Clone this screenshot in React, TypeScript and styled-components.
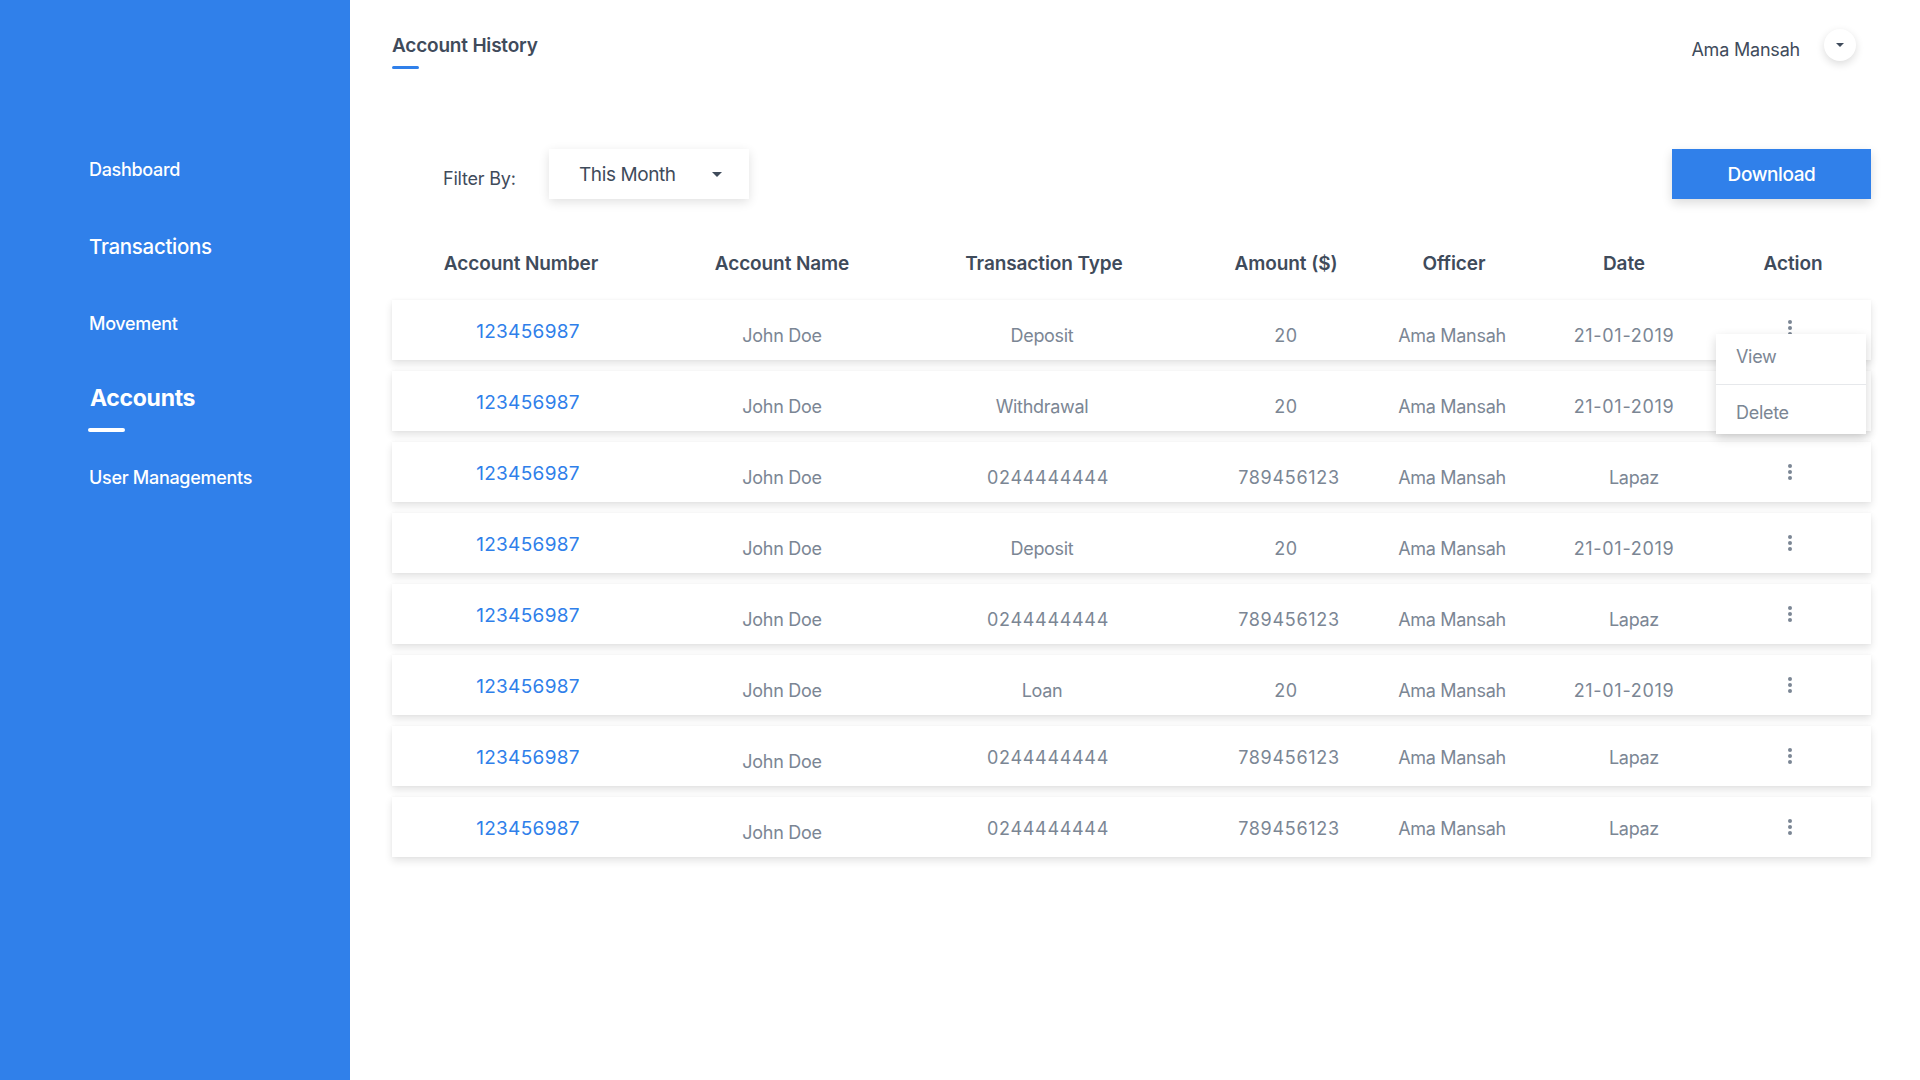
import React from "react";
import styled, { createGlobalStyle } from "styled-components";

const GlobalStyle = createGlobalStyle`
  html, body { margin: 0; padding: 0; background: #ffffff; }
  body { font-family: Inter, "Noto Sans", "Liberation Sans", sans-serif; -webkit-font-smoothing: antialiased; }
  * { box-sizing: border-box; }
`;

const BLUE = "#3080EA";
const DARK = "#3F4B5B";
const GRAY = "#7B8694";
const LINK = "#2F7FEA";

const Layout = styled.div`
  display: flex;
  width: 1920px;
  height: 1080px;
  overflow: hidden;
`;

const Sidebar = styled.aside`
  width: 350px;
  flex: 0 0 350px;
  background: ${BLUE};
  padding-top: 131px;
  padding-left: 89px;
  display: flex;
  flex-direction: column;
`;

const NavItem = styled.a<{ $size: number; $active?: boolean }>`
  position: relative;
  display: flex;
  align-items: center;
  height: 77px;
  color: #ffffff;
  font-size: ${(p) => p.$size}px;
  font-weight: ${(p) => (p.$active ? 700 : 500)};
  letter-spacing: -0.3px;
  text-decoration: none;
  ${(p) =>
    p.$active
      ? `
    margin-top: -3px;
    margin-bottom: 3px;
    padding-left: 1px;
    &::after {
      content: "";
      position: absolute;
      left: -1px;
      top: 69px;
      width: 37px;
      height: 4px;
      border-radius: 2px;
      background: #ffffff;
    }
  `
      : ""}
`;

const Main = styled.main`
  flex: 1;
  padding: 0 49px 0 42px;
  display: flex;
  flex-direction: column;
`;

const TopBar = styled.header`
  display: flex;
  justify-content: space-between;
  align-items: flex-start;
  height: 149px;
`;

const PageTitle = styled.h1`
  position: relative;
  margin: 34px 0 0;
  font-size: 19px;
  font-weight: 600;
  color: ${DARK};
  letter-spacing: -0.2px;
  line-height: 24px;
  &::after {
    content: "";
    position: absolute;
    left: 0;
    top: 32px;
    width: 27px;
    height: 3px;
    border-radius: 2px;
    background: ${BLUE};
  }
`;

const UserBox = styled.div`
  display: flex;
  align-items: center;
  gap: 24px;
  margin-top: 29px;
  margin-right: 15px;
`;

const UserName = styled.span`
  font-size: 18px;
  color: ${DARK};
  letter-spacing: -0.2px;
  margin-top: 8px;
`;

const CircleButton = styled.button`
  width: 32px;
  height: 32px;
  border-radius: 50%;
  border: none;
  background: #ffffff;
  box-shadow: 0 3px 8px rgba(0, 0, 0, 0.14);
  display: flex;
  align-items: center;
  justify-content: center;
  padding: 0;
`;

const Toolbar = styled.div`
  display: flex;
  align-items: center;
  justify-content: space-between;
  height: 50px;
`;

const FilterGroup = styled.div`
  display: flex;
  align-items: center;
  padding-left: 51px;
`;

const FilterLabel = styled.span`
  font-size: 18px;
  color: ${DARK};
  letter-spacing: -0.2px;
  width: 106px;
  margin-top: 9px;
`;

const Select = styled.div`
  width: 200px;
  height: 50px;
  background: #ffffff;
  box-shadow: 0 3px 10px rgba(0, 0, 0, 0.12);
  display: flex;
  align-items: center;
  justify-content: space-between;
  padding: 0 27px 0 30px;
  font-size: 19px;
  color: ${DARK};
  letter-spacing: -0.4px;
`;

const DownloadButton = styled.button`
  width: 199px;
  height: 50px;
  border: none;
  background: ${BLUE};
  color: #ffffff;
  font-family: inherit;
  font-size: 19px;
  font-weight: 500;
  letter-spacing: -0.4px;
  box-shadow: 0 4px 10px rgba(0, 0, 0, 0.14);
`;

const COLS = "264px 252px 268px 218px 116px 224px 116px 1fr";

const HeaderRow = styled.div`
  display: grid;
  grid-template-columns: ${COLS};
  align-items: center;
  height: 101px;
  padding-top: 27px;
`;

const HeaderCell = styled.div<{ $dx?: number }>`
  text-align: center;
  font-size: 19px;
  font-weight: 600;
  color: ${DARK};
  letter-spacing: -0.1px;
  white-space: nowrap;
  transform: translateX(${(p) => p.$dx ?? 0}px);
`;

const Rows = styled.div`
  position: relative;
  display: flex;
  flex-direction: column;
  gap: 11px;
`;

const Row = styled.div`
  display: grid;
  grid-template-columns: ${COLS};
  align-items: center;
  height: 60px;
  background: #ffffff;
  box-shadow: 0 4px 8px rgba(0, 0, 0, 0.11), 0 0 3px rgba(0, 0, 0, 0.04);
`;

const Cell = styled.div<{ $dy?: number; $dx?: number; $link?: boolean; $num?: boolean }>`
  text-align: center;
  white-space: nowrap;
  font-size: ${(p) => (p.$link ? 19 : 18)}px;
  color: ${(p) => (p.$link ? LINK : GRAY)};
  letter-spacing: ${(p) => (p.$link ? 0.3 : p.$num ? 0.7 : -0.3)}px;
  transform: translate(${(p) => p.$dx ?? 0}px, ${(p) => p.$dy ?? 0}px);
`;

const ActionCell = styled.div<{ $dy?: number }>`
  display: flex;
  justify-content: center;
  transform: translate(-2px, ${(p) => p.$dy ?? 0}px);
`;

const Menu = styled.div`
  position: absolute;
  top: 34px;
  right: 5px;
  width: 150px;
  background: #ffffff;
  box-shadow: 0 4px 10px rgba(0, 0, 0, 0.16);
  display: flex;
  flex-direction: column;
  z-index: 2;
`;

const MenuItem = styled.div<{ $divider?: boolean; $dy?: number }>`
  height: 50px;
  display: flex;
  align-items: center;
  padding-left: 20px;
  font-size: 18px;
  color: ${GRAY};
  letter-spacing: -0.3px;
  border-top: ${(p) => (p.$divider ? "1px solid #E6E8EB" : "none")};
  & > span {
    transform: translateY(${(p) => p.$dy ?? 0}px);
  }
`;

const Caret = ({ color = DARK, w = 10 }: { color?: string; w?: number }) => (
  <svg width={w} height={w / 2} viewBox="0 0 10 5" aria-hidden>
    <path d="M0 0 L10 0 L5 5 Z" fill={color} />
  </svg>
);

const Kebab = () => (
  <svg width="4" height="16" viewBox="0 0 4 16" aria-hidden>
    <circle cx="2" cy="2" r="2" fill={GRAY} />
    <circle cx="2" cy="8" r="2" fill={GRAY} />
    <circle cx="2" cy="14" r="2" fill={GRAY} />
  </svg>
);

type RowData = {
  type: string;
  amount: string;
  date: string;
  phone: boolean;
  numDy: number;
  nameDy: number;
  restDy: number;
  kebabDy: number;
};

const deposit = { amount: "20", date: "21-01-2019", phone: false };
const phone = { amount: "789456123", date: "Lapaz", phone: true };

const rows: RowData[] = [
  { type: "Deposit", ...deposit, numDy: 1, nameDy: 5, restDy: 5, kebabDy: -2 },
  { type: "Withdrawal", ...deposit, numDy: 1, nameDy: 5, restDy: 5, kebabDy: 0 },
  { type: "0244444444", ...phone, numDy: 1, nameDy: 5, restDy: 5, kebabDy: 0 },
  { type: "Deposit", ...deposit, numDy: 1, nameDy: 5, restDy: 5, kebabDy: 0 },
  { type: "0244444444", ...phone, numDy: 1, nameDy: 5, restDy: 5, kebabDy: 0 },
  { type: "Loan", ...deposit, numDy: 1, nameDy: 5, restDy: 5, kebabDy: 0 },
  { type: "0244444444", ...phone, numDy: 1, nameDy: 5, restDy: 1, kebabDy: 0 },
  { type: "0244444444", ...phone, numDy: 1, nameDy: 5, restDy: 1, kebabDy: 0 },
];

export default function App() {
  return (
    <>
      <GlobalStyle />
      <Layout>
        <Sidebar>
          <NavItem $size={18}>Dashboard</NavItem>
          <NavItem $size={20.5}>Transactions</NavItem>
          <NavItem $size={18}>Movement</NavItem>
          <NavItem $size={23} $active>
            Accounts
          </NavItem>
          <NavItem $size={18}>User Managements</NavItem>
        </Sidebar>
        <Main>
          <TopBar>
            <PageTitle>Account History</PageTitle>
            <UserBox>
              <UserName>Ama Mansah</UserName>
              <CircleButton aria-label="User menu">
                <Caret w={8} />
              </CircleButton>
            </UserBox>
          </TopBar>
          <Toolbar>
            <FilterGroup>
              <FilterLabel>Filter By:</FilterLabel>
              <Select>
                <span>This Month</span>
                <Caret />
              </Select>
            </FilterGroup>
            <DownloadButton>Download</DownloadButton>
          </Toolbar>
          <HeaderRow>
            <HeaderCell $dx={-3}>Account Number</HeaderCell>
            <HeaderCell>Account Name</HeaderCell>
            <HeaderCell $dx={2}>Transaction Type</HeaderCell>
            <HeaderCell $dx={1}>Amount ($)</HeaderCell>
            <HeaderCell $dx={2}>Officer</HeaderCell>
            <HeaderCell $dx={2}>Date</HeaderCell>
            <HeaderCell $dx={1}>Action</HeaderCell>
          </HeaderRow>
          <Rows>
            {rows.map((r, i) => (
              <Row key={i}>
                <Cell $link $dx={4} $dy={r.numDy}>
                  123456987
                </Cell>
                <Cell $dy={r.nameDy}>John Doe</Cell>
                <Cell $dy={r.restDy} $num={r.phone} $dx={r.phone ? 6 : 0}>
                  {r.type}
                </Cell>
                <Cell $dy={r.restDy} $num $dx={r.phone ? 4 : 1}>
                  {r.amount}
                </Cell>
                <Cell $dy={r.restDy}>Ama Mansah</Cell>
                <Cell $dy={r.restDy} $num={!r.phone} $dx={r.phone ? 12 : 2}>
                  {r.date}
                </Cell>
                <ActionCell $dy={r.kebabDy}>
                  <Kebab />
                </ActionCell>
              </Row>
            ))}
            <Menu>
              <MenuItem $dy={-3}>
                <span>View</span>
              </MenuItem>
              <MenuItem $divider $dy={3}>
                <span>Delete</span>
              </MenuItem>
            </Menu>
          </Rows>
        </Main>
      </Layout>
    </>
  );
}
